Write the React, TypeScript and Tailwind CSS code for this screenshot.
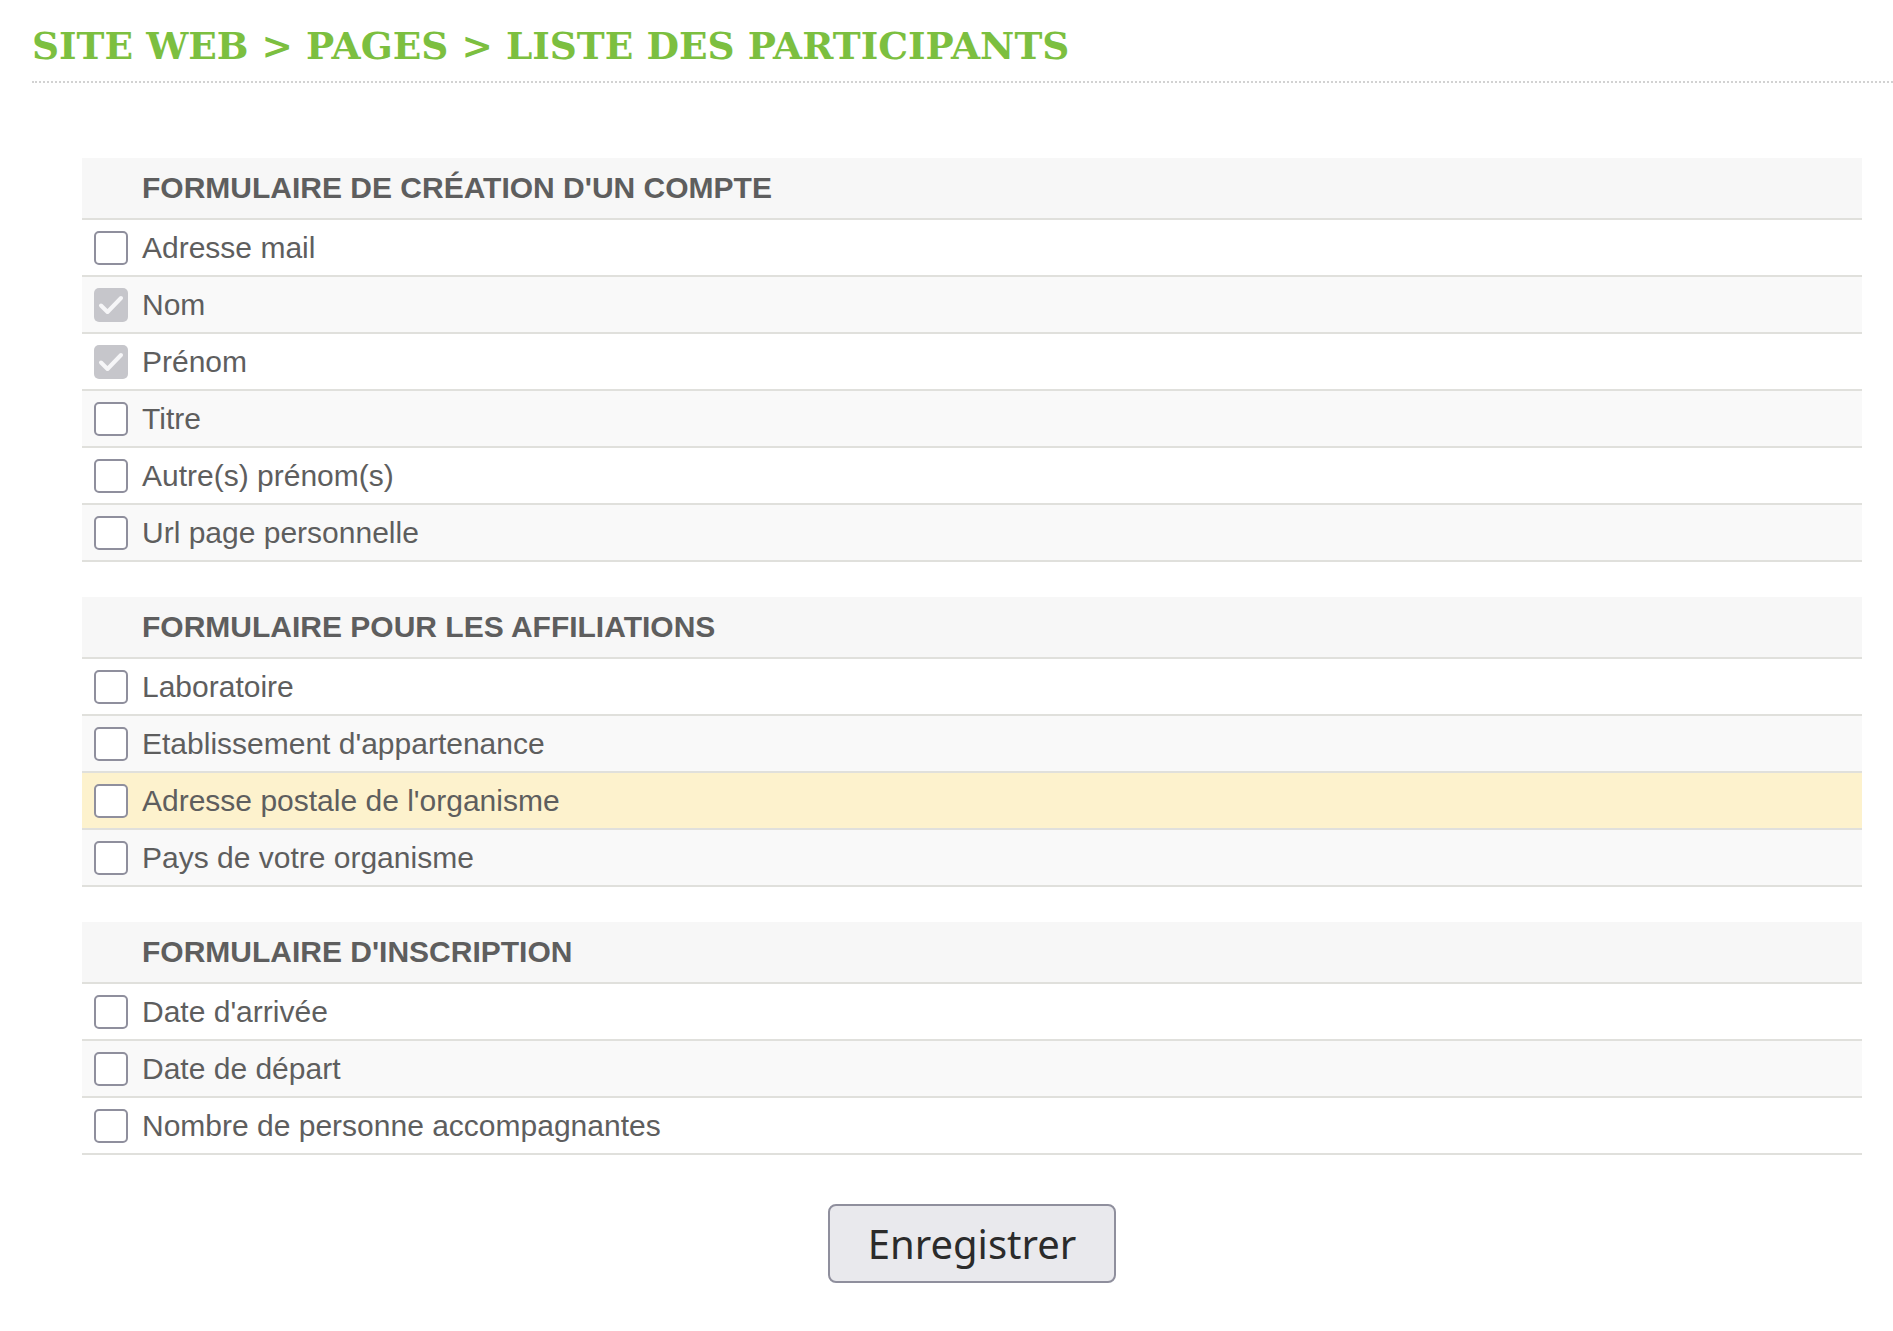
import React from "react";

type Field = { label: string; checked?: boolean; highlight?: boolean };
type Section = { title: string; fields: Field[] };

const sections: Section[] = [
  {
    title: "FORMULAIRE DE CRÉATION D'UN COMPTE",
    fields: [
      { label: "Adresse mail" },
      { label: "Nom", checked: true },
      { label: "Prénom", checked: true },
      { label: "Titre" },
      { label: "Autre(s) prénom(s)" },
      { label: "Url page personnelle" },
    ],
  },
  {
    title: "FORMULAIRE POUR LES AFFILIATIONS",
    fields: [
      { label: "Laboratoire" },
      { label: "Etablissement d'appartenance" },
      { label: "Adresse postale de l'organisme", highlight: true },
      { label: "Pays de votre organisme" },
    ],
  },
  {
    title: "FORMULAIRE D'INSCRIPTION",
    fields: [
      { label: "Date d'arrivée" },
      { label: "Date de départ" },
      { label: "Nombre de personne accompagnantes" },
    ],
  },
];

function Checkbox({ checked }: { checked?: boolean }) {
  if (checked) {
    return (
      <span className="w-[34px] h-[34px] rounded-[5px] bg-[#c6c6cb] flex shrink-0">
        <svg width="34" height="34" viewBox="0 0 34 34" fill="none">
          <path d="M7 17.5l6.5 6.5L27 10" stroke="#f6f6f8" strokeWidth="4" strokeLinecap="round" strokeLinejoin="round" />
        </svg>
      </span>
    );
  }
  return <span className="w-[34px] h-[34px] rounded-[5px] border-2 border-[#8f8f9d] bg-white shrink-0" />;
}

function FieldRow({ field, index }: { field: Field; index: number }) {
  const bg = field.highlight ? "bg-[#fdf2cd]" : index % 2 === 0 ? "bg-white" : "bg-[#f9f9f9]";
  return (
    <label className={`flex items-center h-[57px] border-b-2 border-[#e0e0dc] pl-[12px] gap-[14px] ${bg}`}>
      <Checkbox checked={field.checked} />
      <span className="text-[30px] text-[#5e5e5e]">{field.label}</span>
    </label>
  );
}

export default function App() {
  return (
    <div className="min-h-screen bg-white" style={{ fontFamily: '"Liberation Sans", Arial, sans-serif' }}>
      <div className="pl-[32px] pt-[28px]">
        <h1
          className="text-[37.5px] leading-[37px] font-bold text-[#7cbf40] pb-[16px] border-b-2 border-dotted border-[#d2d2d2]"
          style={{ fontFamily: '"DejaVu Serif", serif' }}
        >
          SITE WEB &gt; PAGES &gt; LISTE DES PARTICIPANTS
        </h1>
      </div>

      <form className="ml-[82px] mr-[31px] mt-[75px] flex flex-col gap-[35px]">
        {sections.map((s) => (
          <div key={s.title}>
            <div className="h-[62px] bg-[#f7f7f7] border-b-2 border-[#e0e0dc] flex items-center pl-[60px] pb-[1px]">
              <span className="text-[30px] font-bold text-[#5e5e5e]">{s.title}</span>
            </div>
            {s.fields.map((f, i) => (
              <FieldRow key={f.label} field={f} index={i} />
            ))}
          </div>
        ))}
        <div className="flex justify-center mt-[14px]">
          <button
            type="button"
            className="w-[288px] h-[79px] rounded-[8px] border-2 border-[#8f8f9d] bg-[#e9e9ed] text-[40px] text-[#2b2b2b] flex items-center justify-center"
            style={{ fontFamily: '"Noto Sans", sans-serif' }}
          >
            Enregistrer
          </button>
        </div>
      </form>
    </div>
  );
}
